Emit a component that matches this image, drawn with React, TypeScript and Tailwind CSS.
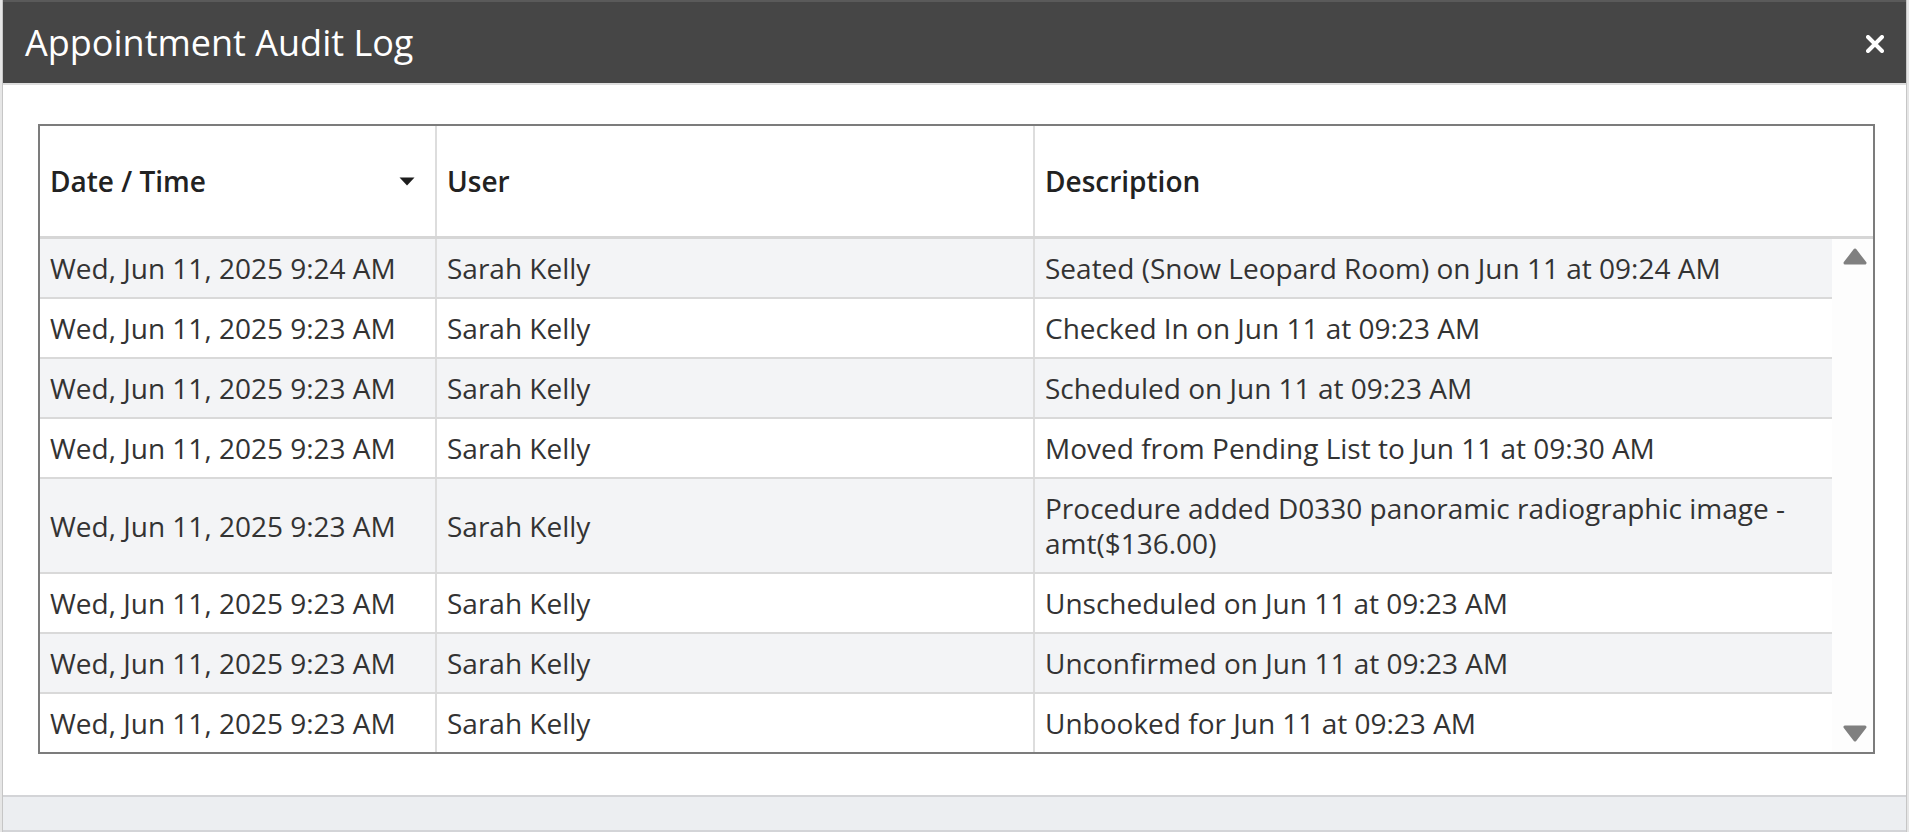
import { useState } from "react";

interface AuditEntry {
  when: string;
  user: string;
  description: string;
}

const entries: AuditEntry[] = [
  { when: "Wed, Jun 11, 2025 9:24 AM", user: "Sarah Kelly", description: "Seated (Snow Leopard Room) on Jun 11 at 09:24 AM" },
  { when: "Wed, Jun 11, 2025 9:23 AM", user: "Sarah Kelly", description: "Checked In on Jun 11 at 09:23 AM" },
  { when: "Wed, Jun 11, 2025 9:23 AM", user: "Sarah Kelly", description: "Scheduled on Jun 11 at 09:23 AM" },
  { when: "Wed, Jun 11, 2025 9:23 AM", user: "Sarah Kelly", description: "Moved from Pending List to Jun 11 at 09:30 AM" },
  {
    when: "Wed, Jun 11, 2025 9:23 AM",
    user: "Sarah Kelly",
    description: "Procedure added D0330 panoramic radiographic image - amt($136.00)",
  },
  { when: "Wed, Jun 11, 2025 9:23 AM", user: "Sarah Kelly", description: "Unscheduled on Jun 11 at 09:23 AM" },
  { when: "Wed, Jun 11, 2025 9:23 AM", user: "Sarah Kelly", description: "Unconfirmed on Jun 11 at 09:23 AM" },
  { when: "Wed, Jun 11, 2025 9:23 AM", user: "Sarah Kelly", description: "Unbooked for Jun 11 at 09:23 AM" },
];

const cols = "grid grid-cols-[397px_598px_1fr]";

const App = () => {
  const [descending, setDescending] = useState(true);

  return (
    <div className="h-[832px] w-full overflow-hidden bg-[#e6e6e6] px-[2px] font-['Open_Sans',sans-serif]">
      <div className="flex h-full flex-col border-x border-[#c6c6c6] bg-white">
        {/* Title bar */}
        <div className="flex h-[83px] shrink-0 items-center justify-between border-t-2 border-[#5a5a5a] bg-[#464646] pr-[19px] pl-[22px]">
          <h1 className="text-[36px] leading-none text-white">Appointment Audit Log</h1>
          <button className="flex h-6 w-6 items-center justify-center pt-0.5" aria-label="Close">
            <svg width="18" height="18" viewBox="0 0 18 18">
              <path d="M2 2 L16 16 M16 2 L2 16" stroke="white" strokeWidth="4" strokeLinecap="round" />
            </svg>
          </button>
        </div>
        <div className="h-[2px] shrink-0 bg-[#dddddd]" />

        {/* Body */}
        <div className="flex-1 pt-[39px] pr-[31px] pb-[41px] pl-[35px]">
          <div className="flex h-[630px] flex-col border-2 border-[#7c7c7c] text-[28px] leading-[35px]">
            <div className={`${cols} h-[113px] shrink-0 border-b-[3px] border-[#d6d6d6] font-semibold text-[#222]`}>
              <button
                className="flex items-center justify-between border-r-2 border-[#dddddd] pr-[20px] pl-[10px] text-left"
                onClick={() => setDescending(!descending)}
              >
                Date / Time
                <svg width="16" height="9" viewBox="0 0 16 9" className={descending ? "" : "rotate-180"}>
                  <path d="M0.5 0.5 H15.5 L8 8.5 Z" fill="#1d1d1d" />
                </svg>
              </button>
              <div className="flex items-center border-r-2 border-[#dddddd] px-[10px]">User</div>
              <div className="flex items-center px-[10px]">Description</div>
            </div>

            <div className="flex min-h-0 flex-1 overflow-hidden">
              <div className="flex-1">
                {entries.map((entry, i) => (
                  <div
                    key={i}
                    className={`${cols} border-b-2 border-[#d9d9d9] text-[#333] ${i % 2 === 0 ? "bg-[#f3f4f6]" : "bg-white"}`}
                  >
                    <div className="flex items-center border-r-2 border-[#dddddd] pt-3 pb-[11px] pl-[10px]">{entry.when}</div>
                    <div className="flex items-center border-r-2 border-[#dddddd] pt-3 pb-[11px] pl-[10px]">{entry.user}</div>
                    <div className="flex items-center pt-3 pr-4 pb-[11px] pl-[10px]">{entry.description}</div>
                  </div>
                ))}
              </div>
              <div className="flex w-[41px] shrink-0 flex-col items-center justify-between bg-[#fdfdfd] pt-[9px] pb-[10px] pl-1">
                <svg width="24" height="17" viewBox="0 0 24 17">
                  <path d="M12 2 L22 15 H2 Z" fill="#808080" stroke="#808080" strokeWidth="3" strokeLinejoin="round" />
                </svg>
                <svg width="24" height="17" viewBox="0 0 24 17">
                  <path d="M2 2 H22 L12 15 Z" fill="#808080" stroke="#808080" strokeWidth="3" strokeLinejoin="round" />
                </svg>
              </div>
            </div>
          </div>
        </div>

        {/* Footer */}
        <div className="h-[37px] shrink-0 border-t-2 border-b-2 border-[#d3d4d7] bg-[#eceef1]" />
      </div>
    </div>
  );
};

export default App;
